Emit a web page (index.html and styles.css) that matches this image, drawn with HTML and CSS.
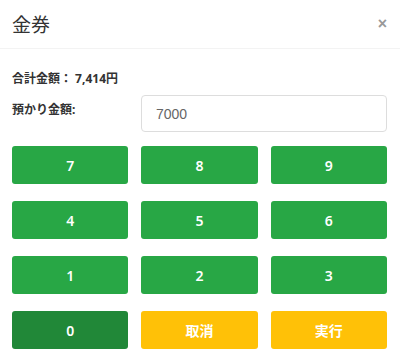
FILE: index.html
```html
<!DOCTYPE html>
<html lang="ja">
<head>
  <meta charset="UTF-8" />
  <title>金券</title>
  <link rel="stylesheet" href="styles.css">
</head>
<body>
  <div class="modal">
    <div class="modal-header">
      <h4 class="modal-title">金券</h4>
      <button class="close" type="button">&times;</button>
    </div>
    <div class="modal-body">
      <div class="total">合計金額： 7,414円</div>
      <div class="deposit">
        <label for="deposit">預かり金額:</label>
        <input type="text" id="deposit" value="7000">
      </div>
      <div class="keypad">
        <button class="btn btn-num">7</button>
        <button class="btn btn-num">8</button>
        <button class="btn btn-num">9</button>
        <button class="btn btn-num">4</button>
        <button class="btn btn-num">5</button>
        <button class="btn btn-num">6</button>
        <button class="btn btn-num">1</button>
        <button class="btn btn-num">2</button>
        <button class="btn btn-num">3</button>
        <button class="btn btn-num active">0</button>
        <button class="btn btn-warn">取消</button>
        <button class="btn btn-warn">実行</button>
      </div>
    </div>
  </div>
</body>
</html>
```

FILE: styles.css
```css
html, body {
  margin: 0;
  padding: 0;
  background: #fff;
}

body {
  font-family: "Noto Sans", "Noto Sans CJK JP", sans-serif;
  color: #333;
}

.modal {
  width: 400px;
}

.modal-header {
  display: flex;
  align-items: center;
  justify-content: space-between;
  height: 49px;
  padding: 0 12px;
  border-bottom: 1px solid #f3f3f3;
  box-sizing: border-box;
}

.modal-title {
  margin: 0;
  font-size: 19px;
  font-weight: normal;
  color: #333;
}

.close {
  border: none;
  background: none;
  padding: 0;
  margin-right: 1px;
  font-size: 16px;
  font-weight: bold;
  color: #999;
  line-height: 1;
  cursor: pointer;
}

.modal-body {
  padding: 21px 13px 12px 12px;
}

.total {
  font-size: 12px;
  font-weight: bold;
  line-height: 18px;
  margin-bottom: 7px;
}

.deposit {
  display: flex;
  align-items: center;
  margin-bottom: 14px;
}

.deposit label {
  width: 129px;
  font-size: 12px;
  font-weight: bold;
  margin-top: -9px;
}

.deposit input {
  flex: 1;
  height: 37px;
  padding: 0 14px;
  border: 1px solid #ddd;
  border-radius: 4px;
  font-family: "Liberation Sans", "Noto Sans", sans-serif;
  font-size: 14px;
  color: #666;
  box-sizing: border-box;
}

.keypad {
  display: grid;
  grid-template-columns: repeat(3, 1fr);
  column-gap: 13px;
  row-gap: 17px;
}

.btn {
  height: 38px;
  border: none;
  border-radius: 3px;
  color: #fff;
  font-family: "Noto Sans", "Noto Sans CJK JP", sans-serif;
  font-size: 14px;
  font-weight: 600;
  cursor: pointer;
}

.btn-num {
  background-color: #28a745;
}

.btn-num.active {
  background-color: #218838;
}

.btn-warn {
  background-color: #ffc107;
}
```
